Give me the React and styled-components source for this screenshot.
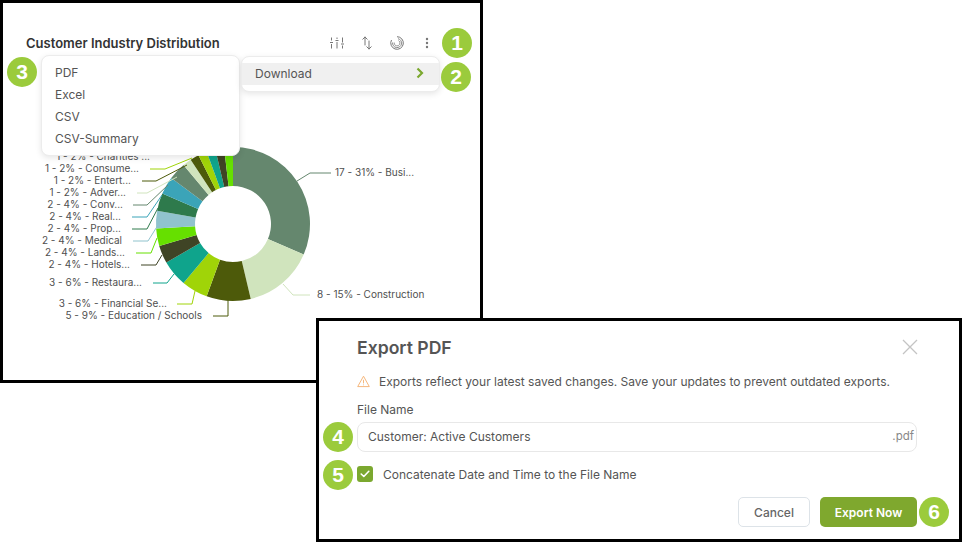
import React from "react";
import styled, { createGlobalStyle } from "styled-components";

const GlobalStyle = createGlobalStyle`
  html, body {
    margin: 0;
    padding: 0;
    background: #fff;
    font-family: "Inter", "Liberation Sans", sans-serif;
  }
`;

const CX = 233;
const CY = 224;
const R_OUT = 77;
const R_IN = 38;
const TOTAL = 54;

const COLORS = {
  sage: "#65876e",
  pale: "#d0e4bd",
  olive: "#4d5a0a",
  lime: "#a0d408",
  teal: "#0fa48c",
  dark: "#3f4425",
  bright: "#66e000",
  sky: "#90c3cd",
  forest: "#2e7a4c",
  blue: "#3ba4b8",
};

const slices = [
  { value: 17, color: COLORS.sage, label: "17 - 31% - Busi...", x: 335, y: 172, anchor: "start", line: "297,181 310,173 331,173" },
  { value: 8, color: COLORS.pale, label: "8 - 15% - Construction", x: 317, y: 294, anchor: "start", line: "283,284 293,295 310,295" },
  { value: 5, color: COLORS.olive, label: "5 - 9% - Education / Schools", x: 202, y: 315, anchor: "end", line: "228,300 228,316 213,316" },
  { value: 3, color: COLORS.lime, label: "3 - 6% - Financial Se...", x: 167, y: 303, anchor: "end", line: "195,291 192,304 177,304" },
  { value: 3, color: COLORS.teal, label: "3 - 6% - Restaura...", x: 142, y: 282, anchor: "end", line: "174,274 167,283 153,283" },
  { value: 2, color: COLORS.dark, label: "2 - 4% - Hotels...", x: 130, y: 264, anchor: "end", line: "162,255 156,265 141,265" },
  { value: 2, color: COLORS.bright, label: "2 - 4% - Lands...", x: 125, y: 252, anchor: "end", line: "157,238 151,253 136,253" },
  { value: 2, color: COLORS.sky, label: "2 - 4% - Medical", x: 122, y: 240, anchor: "end", line: "158,225 148,241 133,241" },
  { value: 2, color: COLORS.forest, label: "2 - 4% - Prop...", x: 121, y: 228, anchor: "end", line: "158,208 147,229 132,229" },
  { value: 2, color: COLORS.blue, label: "2 - 4% - Real...", x: 121, y: 216, anchor: "end", line: "162,195 147,217 132,217" },
  { value: 2, color: COLORS.sage, label: "2 - 4% - Conv...", x: 123, y: 204, anchor: "end", line: "168,185 147,205 133,205" },
  { value: 1, color: COLORS.pale, label: "1 - 2% - Adver...", x: 126, y: 192, anchor: "end", line: "177,177 147,193 137,193" },
  { value: 1, color: COLORS.olive, label: "1 - 2% - Entert...", x: 131, y: 180, anchor: "end", line: "187,165 156,181 142,181" },
  { value: 1, color: COLORS.lime, label: "1 - 2% - Consume...", x: 139, y: 168, anchor: "end", line: "192,158 165,169 150,169" },
  { value: 1, color: COLORS.teal, label: "1 - 2% - Charities ...", x: 150, y: 156, anchor: "end" },
  { value: 1, color: COLORS.dark },
  { value: 1, color: COLORS.bright },
];

const polar = (r, deg) => {
  const a = (deg * Math.PI) / 180;
  return [CX + r * Math.sin(a), CY - r * Math.cos(a)];
};

const arcPath = (start, end) => {
  const large = end - start > 180 ? 1 : 0;
  const [x1, y1] = polar(R_OUT, start);
  const [x2, y2] = polar(R_OUT, end);
  const [x3, y3] = polar(R_IN, end);
  const [x4, y4] = polar(R_IN, start);
  return `M${x1} ${y1}A${R_OUT} ${R_OUT} 0 ${large} 1 ${x2} ${y2}L${x3} ${y3}A${R_IN} ${R_IN} 0 ${large} 0 ${x4} ${y4}Z`;
};

function Donut() {
  let angle = 0;
  return (
    <ChartSvg width="477" height="327" viewBox="3 53 477 327">
      {slices.map((s, i) => {
        const start = angle;
        angle += (s.value / TOTAL) * 360;
        return <path key={i} d={arcPath(start, angle)} fill={s.color} />;
      })}
      {slices.map(
        (s, i) =>
          s.line && <polyline key={i} points={s.line} fill="none" stroke={s.color} strokeWidth="1" />
      )}
      {slices.map(
        (s, i) =>
          s.label && (
            <ChartLabel key={i} x={s.x} y={s.y} textAnchor={s.anchor} dominantBaseline="central">
              {s.label}
            </ChartLabel>
          )
      )}
    </ChartSvg>
  );
}

const SlidersIcon = () => (
  <svg width="16" height="16" viewBox="0 0 16 16" fill="none" stroke="#777" strokeWidth="1">
    <path d="M2.500 2.500v3M2.500 9v4.500M8 2.500v1.500M8 7v6.500M13.500 2.500v5M13.500 10.500v3" />
    <path d="M1 7.500h3M6.500 5.500h3M12 9h3" />
  </svg>
);

const SortIcon = () => (
  <svg width="16" height="16" viewBox="0 0 16 16" fill="none" stroke="#777" strokeWidth="1" strokeLinecap="round" strokeLinejoin="round">
    <path d="M6 10V2M3.800 4.200 6 2l2.200 2.200" />
    <path d="M10 6v8M7.800 11.800 10 14l2.200-2.200" />
  </svg>
);

const SpiralIcon = () => (
  <svg width="16" height="16" viewBox="0 0 16 16" fill="none" stroke="#777" strokeWidth="1">
    <path d="M8 1.700A6.300 6.300 0 1 1 2.500 5" />
    <path d="M9 3.700A4.500 4.500 0 1 1 3.600 7.500" stroke="#888" />
    <path d="M9.500 5.500A2.900 2.900 0 1 1 5.200 7.500" stroke="#999" />
  </svg>
);

const DotsIcon = () => (
  <svg width="16" height="16" viewBox="0 0 16 16" fill="#777">
    <circle cx="8" cy="4" r="1.200" />
    <circle cx="8" cy="8" r="1.200" />
    <circle cx="8" cy="12" r="1.200" />
  </svg>
);

const Chevron = () => (
  <svg width="8" height="12" viewBox="0 0 8 12" fill="none" stroke="#7ba82f" strokeWidth="2.200">
    <path d="M1.500 1.500 6 6l-4.500 4.500" />
  </svg>
);

const WarningIcon = () => (
  <svg width="13" height="13" viewBox="0 0 13 13" fill="none" stroke="#f5b77c" strokeWidth="1" strokeLinejoin="round">
    <path d="M6.500 1.200 12.300 11.600H.7Z" />
    <path d="M6.500 4.800v3.600M6.500 9.500v.8" />
  </svg>
);

const CloseIcon = () => (
  <svg width="16" height="16" viewBox="0 0 16 16" fill="none" stroke="#c4c4c4" strokeWidth="1.300">
    <path d="M1 1l14 14M15 1 1 15" />
  </svg>
);

const CheckIcon = () => (
  <svg width="10" height="8" viewBox="0 0 10 8" fill="none" stroke="#fff" strokeWidth="1.600" strokeLinecap="round" strokeLinejoin="round">
    <path d="M1.200 4 3.800 6.500 8.800 1.300" />
  </svg>
);

export default function App() {
  return (
    <Canvas>
      <GlobalStyle />
      <ChartWindow>
        <ChartHeader>
          <ChartTitle>Customer Industry Distribution</ChartTitle>
          <IconRow>
            <SlidersIcon />
            <SortIcon />
            <SpiralIcon />
            <DotsIcon />
          </IconRow>
        </ChartHeader>
        <Donut />
      </ChartWindow>

      <FormatMenu>
        <MenuItem>PDF</MenuItem>
        <MenuItem>Excel</MenuItem>
        <MenuItem>CSV</MenuItem>
        <MenuItem>CSV-Summary</MenuItem>
      </FormatMenu>
      <DownloadMenu>
        <DownloadRow>
          Download
          <Chevron />
        </DownloadRow>
      </DownloadMenu>

      <ModalWindow>
        <ModalHeader>
          <ModalTitle>Export PDF</ModalTitle>
          <CloseIcon />
        </ModalHeader>
        <Notice>
          <WarningIcon />
          Exports reflect your latest saved changes. Save your updates to prevent outdated exports.
        </Notice>
        <FieldLabel>File Name</FieldLabel>
        <FileInput>
          Customer: Active Customers
          <Extension>.pdf</Extension>
        </FileInput>
        <CheckRow>
          <CheckBox>
            <CheckIcon />
          </CheckBox>
          Concatenate Date and Time to the File Name
        </CheckRow>
        <Actions>
          <CancelButton>Cancel</CancelButton>
          <ExportButton>Export Now</ExportButton>
        </Actions>
      </ModalWindow>

      <Badge $x={457} $y={43}>1</Badge>
      <Badge $x={456} $y={77}>2</Badge>
      <Badge $x={22} $y={72}>3</Badge>
      <Badge $x={338} $y={437}>4</Badge>
      <Badge $x={338} $y={475}>5</Badge>
      <Badge $x={934} $y={512}>6</Badge>
    </Canvas>
  );
}

const Canvas = styled.div`
  position: relative;
  width: 964px;
  height: 543px;
  overflow: hidden;
  background: #fff;
`;

const ChartWindow = styled.section`
  position: absolute;
  left: 0;
  top: 0;
  width: 483px;
  height: 383px;
  box-sizing: border-box;
  border: 3px solid #000;
  background: #fff;
`;

const ChartHeader = styled.header`
  display: flex;
  align-items: center;
  justify-content: space-between;
  height: 20px;
  margin-top: 30px;
  padding: 0 45px 0 23px;
`;

const ChartTitle = styled.h2`
  margin: 0;
  font-size: 13px;
  font-weight: 600;
  color: #333;
`;

const IconRow = styled.div`
  display: flex;
  align-items: center;
  gap: 14px;
`;

const ChartSvg = styled.svg`
  display: block;
`;

const ChartLabel = styled.text`
  font-family: "Inter", "Liberation Sans", sans-serif;
  font-size: 10px;
  fill: #4f4f4f;
`;

const Menu = styled.div`
  position: absolute;
  box-sizing: border-box;
  width: 199px;
  background: #fff;
  border: 1px solid #ececec;
  border-radius: 8px;
  box-shadow: 0 2px 6px rgba(0, 0, 0, 0.1);
`;

const FormatMenu = styled(Menu)`
  left: 41px;
  top: 55px;
  height: 101px;
  padding: 6px 0;
`;

const MenuItem = styled.div`
  height: 22px;
  line-height: 22px;
  padding-left: 13px;
  font-size: 12px;
  color: #555;
`;

const DownloadMenu = styled(Menu)`
  left: 241px;
  top: 56px;
  height: 36px;
  padding: 6px 0;
`;

const DownloadRow = styled.div`
  display: flex;
  align-items: center;
  justify-content: space-between;
  box-sizing: border-box;
  height: 22px;
  padding: 0 15px 2px 13px;
  background: #f0f0f0;
  font-size: 12px;
  color: #555;
`;

const ModalWindow = styled.section`
  position: absolute;
  left: 316px;
  top: 318px;
  width: 646px;
  height: 224px;
  box-sizing: border-box;
  border: 3px solid #000;
  background: #fff;
  padding: 15px 42px 0 38px;
  display: flex;
  flex-direction: column;
`;

const ModalHeader = styled.header`
  display: flex;
  align-items: center;
  justify-content: space-between;
  height: 22px;
  margin-right: -1px;
`;

const ModalTitle = styled.h2`
  margin: 0;
  font-size: 17.600px;
  font-weight: 600;
  color: #555;
`;

const Notice = styled.p`
  display: flex;
  align-items: center;
  gap: 9px;
  margin: 14px 0 0;
  height: 18px;
  font-size: 12px;
  color: #555;
`;

const FieldLabel = styled.label`
  margin-top: 11px;
  height: 18px;
  line-height: 18px;
  font-size: 12px;
  color: #555;
`;

const FileInput = styled.div`
  display: flex;
  align-items: center;
  justify-content: space-between;
  box-sizing: border-box;
  height: 30px;
  margin-top: 3px;
  padding: 0 2px 2px 10px;
  border: 1px solid #e8e8e8;
  border-radius: 8px;
  font-size: 12px;
  color: #555;
`;

const Extension = styled.span`
  font-size: 11.500px;
  color: #888;
`;

const CheckRow = styled.div`
  display: flex;
  align-items: center;
  gap: 10px;
  height: 16px;
  margin-top: 14px;
  font-size: 12px;
  color: #555;
`;

const CheckBox = styled.span`
  display: flex;
  align-items: center;
  justify-content: center;
  width: 16px;
  height: 16px;
  border-radius: 3px;
  background: #7ba82f;
`;

const Actions = styled.div`
  display: flex;
  justify-content: flex-end;
  gap: 10px;
  margin-top: 15px;
`;

const ActionButton = styled.button`
  box-sizing: border-box;
  height: 30px;
  padding: 0;
  border-radius: 5px;
  font-family: inherit;
  font-size: 12px;
`;

const CancelButton = styled(ActionButton)`
  width: 72px;
  background: #fff;
  border: 1px solid #dde3e8;
  color: #666;
  font-weight: 500;
`;

const ExportButton = styled(ActionButton)`
  width: 97px;
  background: #7fa82e;
  border: none;
  color: #fff;
  font-weight: 600;
`;

const Badge = styled.span`
  position: absolute;
  left: ${(p) => p.$x - 15}px;
  top: ${(p) => p.$y - 15}px;
  width: 30px;
  height: 30px;
  display: flex;
  align-items: center;
  justify-content: center;
  border-radius: 50%;
  background: #9bcb3c;
  color: #fff;
  font-family: "Liberation Sans", sans-serif;
  font-size: 21px;
  font-weight: 700;
`;
